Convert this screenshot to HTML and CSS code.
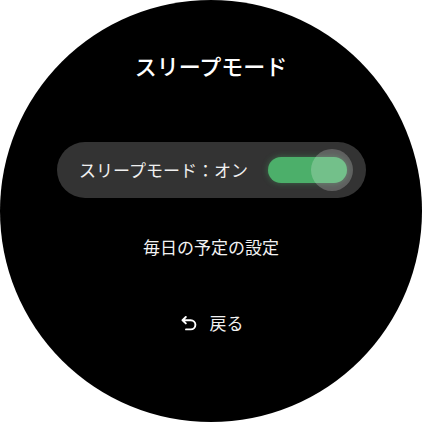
FILE: index.html
```html
<!DOCTYPE html>
<html lang="ja">
<head>
    <meta charset="UTF-8">
    <meta name="viewport" content="width=device-width, initial-scale=1.0">
    <title>スリープモード</title>
    <link rel="stylesheet" href="styles.css">
</head>
<body>
    <div class="watch">
        <h1 class="title">スリープモード</h1>

        <!-- Toggle row -->
        <div class="toggle-row">
            <span class="toggle-label">スリープモード：オン</span>
            <div class="switch">
                <div class="track"></div>
                <div class="thumb"></div>
            </div>
        </div>

        <div class="schedule">毎日の予定の設定</div>

        <div class="back">
            <svg class="back-icon" width="16" height="15" viewBox="0 0 16 15">
                <path d="M4.8 1 L1.5 4.2 L4.8 7.4 M1.5 4.2 H9.8 a4.6 4.6 0 0 1 0 9.2 H5" fill="none" stroke="#fff" stroke-width="1.9" stroke-linecap="round" stroke-linejoin="round"/>
            </svg>
            <span>戻る</span>
        </div>
    </div>
</body>
</html>
```

FILE: styles.css
```css
body {
    margin: 0;
    padding: 0;
    background-color: #fff;
    font-family: "Noto Sans CJK JP", "Noto Sans", sans-serif;
    color: #f2f2f2;
}
.watch {
    width: 422px;
    height: 422px;
    border-radius: 50%;
    background-color: #000;
    display: flex;
    flex-direction: column;
    align-items: center;
    padding-top: 50px;
    box-sizing: border-box;
}
.title {
    margin: 0;
    font-size: 22px;
    font-weight: 500;
    line-height: 30px;
    color: #fff;
}
.toggle-row {
    margin-top: 62px;
    width: 309px;
    height: 56px;
    border-radius: 28px;
    background-color: #333;
    display: flex;
    align-items: center;
    box-sizing: border-box;
    padding-left: 22px;
    margin-left: 1px;
}
.toggle-label {
    font-size: 17px;
    line-height: 24px;
    color: #f0f0f0;
    flex: 1;
}
.switch {
    position: relative;
    width: 79px;
    height: 26px;
    margin-right: 19px;
}
.track {
    width: 100%;
    height: 100%;
    border-radius: 13px;
    background-color: #4caf6a;
    box-shadow: 0 0 6px rgba(76, 175, 106, 0.45);
}
.thumb {
    position: absolute;
    top: -8px;
    right: -6px;
    width: 42px;
    height: 42px;
    border-radius: 50%;
    background-color: rgba(255, 255, 255, 0.22);
}
.schedule {
    margin-top: 37px;
    font-size: 17px;
    line-height: 24px;
    color: #f2f2f2;
}
.back {
    margin-top: 52px;
    margin-left: 2px;
    display: flex;
    align-items: center;
    gap: 13px;
    font-size: 17px;
    line-height: 24px;
    color: #f2f2f2;
}
.back-icon {
    display: block;
    margin-top: 1px;
}
```
